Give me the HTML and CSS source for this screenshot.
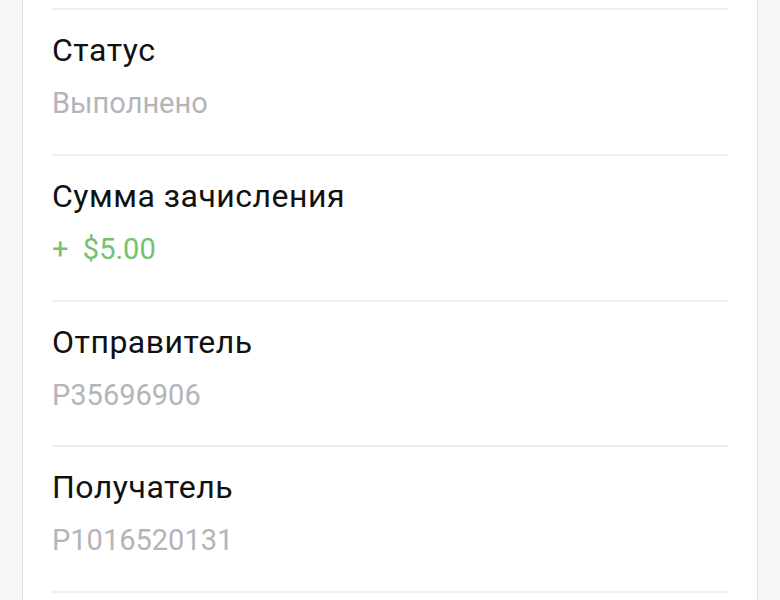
FILE: index.html
```html
<!DOCTYPE html>
<html lang="ru">
<head>
    <meta charset="UTF-8">
    <meta name="viewport" content="width=device-width, initial-scale=1.0">
    <title>Детали перевода</title>
    <link rel="stylesheet" href="styles.css">
</head>
<body>
    <div class="card">
        <div class="row">
            <div class="label">Статус</div>
            <div class="value">Выполнено</div>
        </div>
        <div class="row">
            <div class="label">Сумма зачисления</div>
            <div class="value plus">+&nbsp; $5.00</div>
        </div>
        <div class="row">
            <div class="label">Отправитель</div>
            <div class="value">P35696906</div>
        </div>
        <div class="row">
            <div class="label">Получатель</div>
            <div class="value">P1016520131</div>
        </div>
        <div class="row"></div>
    </div>
</body>
</html>
```

FILE: styles.css
```css
* {
    box-sizing: border-box;
}

body {
    margin: 0;
    background: #f7f7f7;
    font-family: Roboto, "Noto Sans", sans-serif;
    height: 600px;
    overflow: hidden;
}

/* Card */
.card {
    margin: 0 22px;
    padding: 8px 29px 0;
    background: #fff;
    border-left: 1px solid #e2e2e2;
    border-right: 1px solid #e2e2e2;
    height: 600px;
    overflow: hidden;
}

/* Rows */
.row {
    border-top: 2px solid #eeeeee;
    height: 145.75px;
    padding-top: 21px;
}

.label {
    font-size: 32px;
    line-height: 38px;
    letter-spacing: 0.5px;
    color: #111;
}

.value {
    margin-top: 17px;
    font-size: 29px;
    line-height: 34px;
    color: #b3b5b9;
}

.plus {
    color: #74c16f;
}
```
